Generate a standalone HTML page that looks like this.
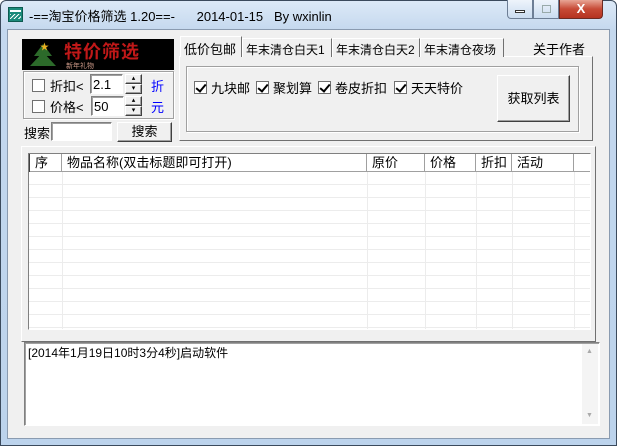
<!DOCTYPE html>
<html><head><meta charset="utf-8"><style>
*{margin:0;padding:0;box-sizing:border-box}
body{width:617px;height:446px;overflow:hidden;background:#fff;font:12px "Liberation Sans","Noto Sans CJK SC",sans-serif;color:#000;position:relative}
.a{position:absolute}
.win{left:0;top:0;width:617px;height:446px;border:1px solid #3b4a5c;border-radius:6px 6px 0 0;background:linear-gradient(#dce9f7,#c4d8ee 30px,#bcd3ec)}
.client{left:7px;top:29px;width:603px;height:410px;background:#f0f0f0;border:1px solid #8a9bb0}
.cb{width:13px;height:13px;border:1px solid #707070;background:#fff}
.cb.k::after{content:"";position:absolute;left:3px;top:0px;width:4px;height:8px;border:solid #000;border-width:0 2px 2px 0;transform:rotate(40deg)}
.sunk{background:#fff;border:1px solid;border-color:#808080 #fff #fff #808080;box-shadow:inset 1px 1px 0 #a0a0a0}
.btn{background:#f0f0f0;border:1px solid;border-color:#fff #404040 #404040 #fff;box-shadow:inset -1px -1px 0 #a0a0a0;text-align:center}
.grp{border:1px solid #a0a0a0;box-shadow:1px 1px 0 #fff, inset 1px 1px 0 #fff}
.tab{top:38px;height:19px;border:1px solid #a0a0a0;border-bottom:none;background:#f0f0f0;font-size:12px;padding:2px 3px;white-space:nowrap;overflow:hidden}
.hd{top:154px;height:18px;border-right:1px solid #a0a0a0;padding-left:5px;font-size:13px;line-height:17px;border-bottom:1px solid #a0a0a0;background:#fff}
</style></head><body>
<div class="a win"></div>
<div class="a" style="left:8px;top:7px;width:15px;height:15px;background:#1b8a7a;border:1px solid #0d5a50"></div>
<div class="a" style="left:10px;top:10px;width:11px;height:2px;background:#fff"></div>
<div class="a" style="left:10px;top:14px;width:11px;height:5px;background:repeating-linear-gradient(135deg,#fff 0 1px,#1b8a7a 1px 3px)"></div>
<div class="a" style="left:29px;top:6px;font-size:13px;white-space:pre">-==淘宝价格筛选 1.20==-      2014-01-15   By wxinlin</div>
<div class="a" style="left:507px;top:0;width:26px;height:19px;border:1px solid #6d7e95;border-top:none;border-radius:0 0 0 4px;background:linear-gradient(#eef4fb,#cadcf0)"></div>
<div class="a" style="left:515px;top:10px;width:10px;height:3px;background:#fff;border:1px solid #333"></div>
<div class="a" style="left:533px;top:0;width:26px;height:19px;border:1px solid #6d7e95;border-top:none;background:linear-gradient(#eef4fb,#cadcf0)"></div>
<div class="a" style="left:542px;top:5px;width:9px;height:8px;border:1px solid #9aa;"></div>
<div class="a" style="left:559px;top:0;width:44px;height:19px;border:1px solid #6d2a22;border-top:none;border-radius:0 0 4px 0;background:linear-gradient(#e8a595,#c74a36 50%,#b53220);color:#fff;text-align:center;font-weight:bold;font-size:13px;line-height:17px">X</div>
<div class="a client"></div>

<div class="a" style="left:22px;top:39px;width:152px;height:31px;background:#000"></div>
<div class="a" style="left:34px;top:44px;width:0;height:0;border-left:9px solid transparent;border-right:9px solid transparent;border-bottom:12px solid #2c6a2a"></div>
<div class="a" style="left:30px;top:52px;width:0;height:0;border-left:13px solid transparent;border-right:13px solid transparent;border-bottom:14px solid #2c6a2a"></div>
<div class="a" style="left:40px;top:40px;color:#e8b020;font-size:9px">★</div>
<div class="a" style="left:64px;top:42px;color:#c01818;font-size:18px;font-weight:bold;letter-spacing:1px;line-height:20px">特价筛选</div>
<div class="a" style="left:66px;top:61px;color:#c98;font-size:7px">新年礼物</div>

<div class="a grp" style="left:23px;top:71px;width:151px;height:48px"></div>
<div class="a cb" style="left:32px;top:79px"></div>
<div class="a" style="left:50px;top:76px;font-size:13px">折扣&lt;</div>
<div class="a sunk" style="left:90px;top:74px;width:33px;height:20px;padding:2px 2px;font-size:13px">2.1</div>
<div class="a btn" style="left:125px;top:74px;width:17px;height:10px;font-size:7px;line-height:7px">▴</div>
<div class="a btn" style="left:125px;top:84px;width:17px;height:10px;font-size:7px;line-height:7px">▾</div>
<div class="a" style="left:151px;top:76px;color:#0000ff;font-size:13px">折</div>
<div class="a cb" style="left:32px;top:100px"></div>
<div class="a" style="left:50px;top:97px;font-size:13px">价格&lt;</div>
<div class="a sunk" style="left:91px;top:96px;width:33px;height:20px;padding:2px 2px;font-size:13px">50</div>
<div class="a btn" style="left:125px;top:96px;width:17px;height:10px;font-size:7px;line-height:7px">▴</div>
<div class="a btn" style="left:125px;top:106px;width:17px;height:10px;font-size:7px;line-height:7px">▾</div>
<div class="a" style="left:151px;top:97px;color:#0000ff;font-size:13px">元</div>

<div class="a" style="left:24px;top:123px;font-size:13px">搜索</div>
<div class="a sunk" style="left:51px;top:122px;width:61px;height:19px"></div>
<div class="a btn" style="left:117px;top:122px;width:55px;height:20px;font-size:13px;line-height:18px">搜索</div>

<div class="a" style="left:179px;top:56px;width:414px;height:85px;border:1px solid;border-color:#fff #707070 #707070 #fff;background:#f0f0f0"></div>
<div class="a tab" style="left:180px;top:36px;width:62px;height:21px;border-color:#fff #707070 #f0f0f0 #fff;z-index:2;font-size:13px">低价包邮</div>
<div class="a tab" style="left:242px;width:90px;border-color:#fff #707070 #fff #fff">年末清仓白天1</div>
<div class="a tab" style="left:332px;width:88px;border-color:#fff #707070 #fff #fff">年末清仓白天2</div>
<div class="a tab" style="left:420px;width:84px;border-color:#fff #707070 #fff #fff">年末清仓夜场</div>
<div class="a" style="left:533px;top:39px;font-size:13px">关于作者</div>
<div class="a grp" style="left:186px;top:66px;width:393px;height:66px"></div>
<div class="a cb k" style="left:194px;top:81px"></div><div class="a" style="left:211px;top:78px;font-size:13px">九块邮</div>
<div class="a cb k" style="left:256px;top:81px"></div><div class="a" style="left:273px;top:78px;font-size:13px">聚划算</div>
<div class="a cb k" style="left:318px;top:81px"></div><div class="a" style="left:335px;top:78px;font-size:13px">卷皮折扣</div>
<div class="a cb k" style="left:394px;top:81px"></div><div class="a" style="left:411px;top:78px;font-size:13px">天天特价</div>
<div class="a btn" style="left:497px;top:75px;width:73px;height:47px;font-size:13px;line-height:45px">获取列表</div>

<div class="a" style="left:21px;top:146px;width:575px;height:196px;border:1px solid;border-color:#fff #707070 #707070 #fff"></div>
<div class="a" style="left:28px;top:153px;width:563px;height:177px;background:#fff;border:1px solid;border-color:#808080 #fff #fff #808080;box-shadow:inset 1px 1px 0 #404040;overflow:hidden">
<div class="a" style="left:0;top:18px;width:563px;height:160px;background:repeating-linear-gradient(#fff 0 12px,#ececec 12px 13px)"></div>
<div class="a" style="left:33px;top:18px;width:1px;height:160px;background:#ececec"></div>
<div class="a" style="left:338px;top:18px;width:1px;height:160px;background:#ececec"></div>
<div class="a" style="left:396px;top:18px;width:1px;height:160px;background:#ececec"></div>
<div class="a" style="left:447px;top:18px;width:1px;height:160px;background:#ececec"></div>
<div class="a" style="left:483px;top:18px;width:1px;height:160px;background:#ececec"></div>
<div class="a" style="left:545px;top:18px;width:1px;height:160px;background:#ececec"></div>
</div>
<div class="a hd" style="left:30px;width:32px">序</div>
<div class="a hd" style="left:62px;width:305px">物品名称(双击标题即可打开)</div>
<div class="a hd" style="left:367px;width:58px">原价</div>
<div class="a hd" style="left:425px;width:51px">价格</div>
<div class="a hd" style="left:476px;width:36px">折扣</div>
<div class="a hd" style="left:512px;width:62px">活动</div>
<div class="a hd" style="left:574px;width:16px;border-right:none"></div>

<div class="a sunk" style="left:24px;top:342px;width:576px;height:84px;padding:1px 3px;font-size:12px">[2014年1月19日10时3分4秒]启动软件</div>
<div class="a" style="left:582px;top:344px;width:16px;height:80px;background:#f4f4f4"></div>
<div class="a" style="left:586px;top:348px;font-size:7px;color:#aaa">▲</div>
<div class="a" style="left:586px;top:412px;font-size:7px;color:#aaa">▼</div>
</body></html>
